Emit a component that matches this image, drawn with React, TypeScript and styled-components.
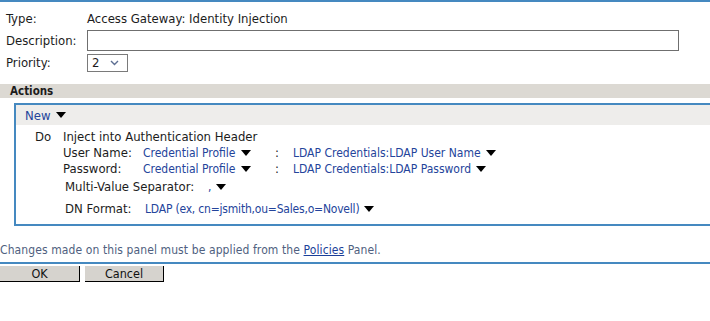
import React from "react";
import styled, { createGlobalStyle } from "styled-components";

const Global = createGlobalStyle`
  html, body { margin: 0; padding: 0; background: #fff; }
  body {
    font-family: "DejaVu Sans Condensed", "DejaVu Sans", sans-serif;
    font-size: 13px;
    color: #1c1c1c;
  }
`;

const BLUE = "#4589c0";

const Page = styled.div`
  width: 710px;
  height: 321px;
  overflow: hidden;
`;

const Rule = styled.div<{ $mt?: number }>`
  height: 2px;
  background: ${BLUE};
  margin-top: ${(p) => p.$mt ?? 0}px;
`;

const Props = styled.div`
  display: grid;
  grid-template-columns: 81px 1fr;
  padding: 9px 0 0 6px;
  row-gap: 3px;
  align-items: center;
`;

const Label = styled.div`
  line-height: 16px;
`;

const Value = styled.div`
  line-height: 16px;
`;

const TextInput = styled.div`
  width: 590px;
  height: 19px;
  border: 1px solid #6f6f6f;
`;

const Select = styled.div`
  width: 35px;
  height: 16px;
  border: 1px solid #7a7a7a;
  display: flex;
  align-items: center;
  padding-left: 4px;
  gap: 11px;
  line-height: 16px;
`;

const SectionHead = styled.div`
  margin-top: 12px;
  height: 14px;
  background: #dcd9d3;
  font-weight: bold;
  font-size: 11.5px;
  padding-left: 10px;
  line-height: 14px;
`;

const ActionBox = styled.div`
  margin: 5px 0 0 14px;
  border: 2px solid ${BLUE};
  border-right: none;
  height: 119px;
`;

const NewBar = styled.div`
  height: 20px;
  background: #eeedeb;
  display: flex;
  align-items: center;
  padding-left: 9px;
`;

const Link = styled.span<{ $size?: number; $ls?: number }>`
  color: #24449b;
  font-size: ${(p) => p.$size ?? 12}px;
  letter-spacing: ${(p) => p.$ls ?? 0}px;
  display: inline-flex;
  align-items: center;
  gap: 5px;
  white-space: nowrap;
`;

const Rows = styled.div`
  display: grid;
  grid-template-columns: 28px auto;
  padding: 4px 0 0 19px;
  line-height: 16px;
`;

const Inner = styled.div`
  display: grid;
  grid-template-columns: 80px 132px 18px auto;
  line-height: 16px;
`;

const Colon = styled.span``;

const Extra = styled.div<{ $mt: number; $lw: number }>`
  display: grid;
  grid-template-columns: ${(p) => p.$lw}px auto;
  margin-top: ${(p) => p.$mt}px;
  padding-left: 49px;
  line-height: 16px;
`;

const Note = styled.div`
  margin-top: 16px;
  color: #4f5f80;
  font-size: 12px;
  letter-spacing: 0.1px;
  line-height: 16px;
`;

const NoteLink = styled.a`
  color: #1c3f99;
  text-decoration: underline;
`;

const Buttons = styled.div`
  display: flex;
  gap: 5px;
  margin-top: 2px;
`;

const Button = styled.div<{ $w: number }>`
  width: ${(p) => p.$w}px;
  height: 15px;
  background: #d6d3ce;
  border-right: 1px solid #000;
  border-bottom: 1px solid #000;
  text-align: center;
  line-height: 15px;
  font-size: 12.5px;
  color: #111;
`;

const Tri = () => (
  <svg width="10" height="6" viewBox="0 0 10 6">
    <path d="M0 0 H10 L5 6 Z" fill="#000" />
  </svg>
);

const Chev = () => (
  <svg width="9" height="6" viewBox="0 0 9 6">
    <path d="M1 1 L4.5 4.5 L8 1" fill="none" stroke="#5d6e92" strokeWidth="1.4" />
  </svg>
);

export default function App() {
  return (
    <Page>
      <Global />
      <Rule />
      <Props>
        <Label>Type:</Label>
        <Value>Access Gateway: Identity Injection</Value>
        <Label>Description:</Label>
        <TextInput />
        <Label>Priority:</Label>
        <Select>
          <span>2</span>
          <Chev />
        </Select>
      </Props>
      <SectionHead>Actions</SectionHead>
      <ActionBox>
        <NewBar>
          <Link $size={13}>
            New <Tri />
          </Link>
        </NewBar>
        <Rows>
          <span>Do</span>
          <div>
            <Value>Inject into Authentication Header</Value>
            <Inner>
              <span>User Name:</span>
              <Link>
                Credential Profile <Tri />
              </Link>
              <Colon>:</Colon>
              <Link>
                LDAP Credentials:LDAP User Name <Tri />
              </Link>
              <span>Password:</span>
              <Link>
                Credential Profile <Tri />
              </Link>
              <Colon>:</Colon>
              <Link>
                LDAP Credentials:LDAP Password <Tri />
              </Link>
            </Inner>
          </div>
        </Rows>
        <Extra $mt={2} $lw={143}>
          <span>Multi-Value Separator:</span>
          <Link>
            , <Tri />
          </Link>
        </Extra>
        <Extra $mt={6} $lw={80}>
          <span>DN Format:</span>
          <Link $ls={-0.2}>
            LDAP (ex, cn=jsmith,ou=Sales,o=Novell) <Tri />
          </Link>
        </Extra>
      </ActionBox>
      <Note>
        Changes made on this panel must be applied from the <NoteLink>Policies</NoteLink> Panel.
      </Note>
      <Rule $mt={4} />
      <Buttons>
        <Button $w={79}>OK</Button>
        <Button $w={78}>Cancel</Button>
      </Buttons>
    </Page>
  );
}
